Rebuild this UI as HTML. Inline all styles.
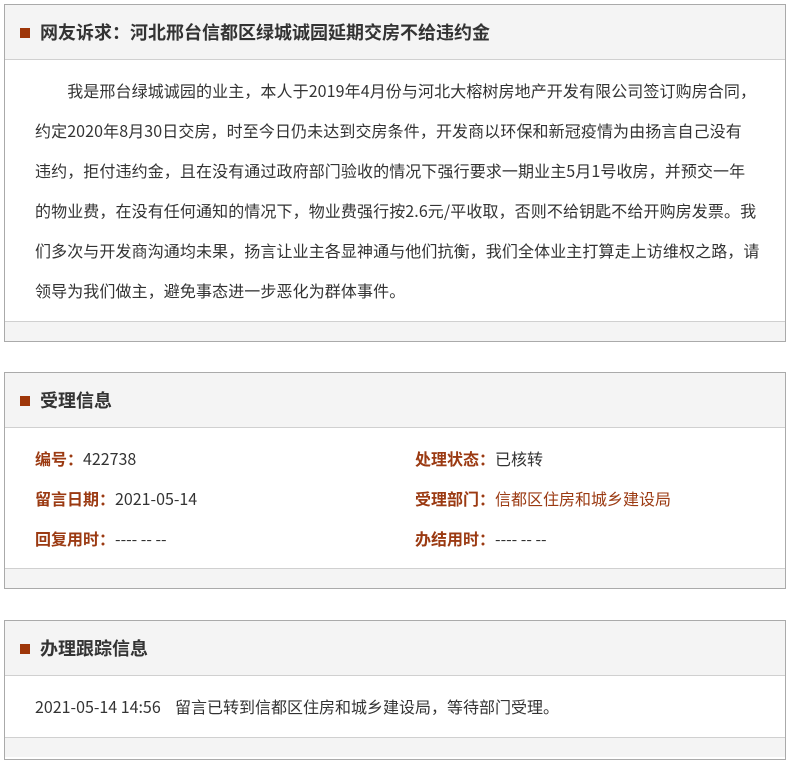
<!DOCTYPE html>
<html><head><meta charset="utf-8"><style>
*{margin:0;padding:0;box-sizing:border-box}
body{width:790px;height:743px;overflow:hidden;background:#fff;font-family:"Noto Sans CJK SC","Liberation Sans",sans-serif;color:#333;position:relative}
.box{position:absolute;left:4px;width:782px;border:1px solid #aaa;background:#fff}
.hd{height:55px;background:#f4f4f4;border-bottom:1px solid #d0d0d0;position:relative}
.hd i{position:absolute;left:15px;top:23px;width:10px;height:10px;background:#9e3609}
.hd b{position:absolute;left:35px;top:0;line-height:55px;font-size:18px;color:#333}
.ft{background:#f4f4f4;border-top:1px solid #d0d0d0;height:20px}
.p{padding:10px 10px 10px 30px;font-size:16px;line-height:40px;white-space:nowrap;letter-spacing:0.1px}
.row{position:absolute;font-size:16px;line-height:20px;white-space:nowrap}
.l{color:#9b3a12;font-weight:bold}
.r{color:#9b3a12}
</style></head><body>
<div class="box" style="top:4px;height:338px">
<div class="hd"><i></i><b>网友诉求：河北邢台信都区绿城诚园延期交房不给违约金</b></div>
<div class="p" style="height:261px">&emsp;&emsp;我是邢台绿城诚园的业主，本人于2019年4月份与河北大榕树房地产开发有限公司签订购房合同，<br>约定2020年8月30日交房，时至今日仍未达到交房条件，开发商以环保和新冠疫情为由扬言自己没有<br>违约，拒付违约金，且在没有通过政府部门验收的情况下强行要求一期业主5月1号收房，并预交一年<br>的物业费，在没有任何通知的情况下，物业费强行按2.6元/平收取，否则不给钥匙不给开购房发票。我<br>们多次与开发商沟通均未果，扬言让业主各显神通与他们抗衡，我们全体业主打算走上访维权之路，请<br>领导为我们做主，避免事态进一步恶化为群体事件。</div>
<div class="ft"></div>
</div>
<div class="box" style="top:372px;height:217px">
<div class="hd"><i></i><b>受理信息</b></div>
<div style="height:140px;position:relative">
<div class="row" style="left:30px;top:20px"><span class="l">编号：</span>422738</div>
<div class="row" style="left:30px;top:60px"><span class="l">留言日期：</span>2021-05-14</div>
<div class="row" style="left:30px;top:100px"><span class="l">回复用时：</span>---- -- --</div>
<div class="row" style="left:410px;top:20px"><span class="l">处理状态：</span>已核转</div>
<div class="row" style="left:410px;top:60px"><span class="l">受理部门：</span><span class="r">信都区住房和城乡建设局</span></div>
<div class="row" style="left:410px;top:100px"><span class="l">办结用时：</span>---- -- --</div>
</div>
<div class="ft"></div>
</div>
<div class="box" style="top:620px;height:140px">
<div class="hd"><i></i><b>办理跟踪信息</b></div>
<div style="height:61px;position:relative">
<div class="row" style="left:30px;top:20px">2021-05-14 14:56&nbsp;&nbsp;&nbsp; 留言已转到信都区住房和城乡建设局，等待部门受理。</div>
</div>
<div class="ft"></div>
</div>
</body></html>
